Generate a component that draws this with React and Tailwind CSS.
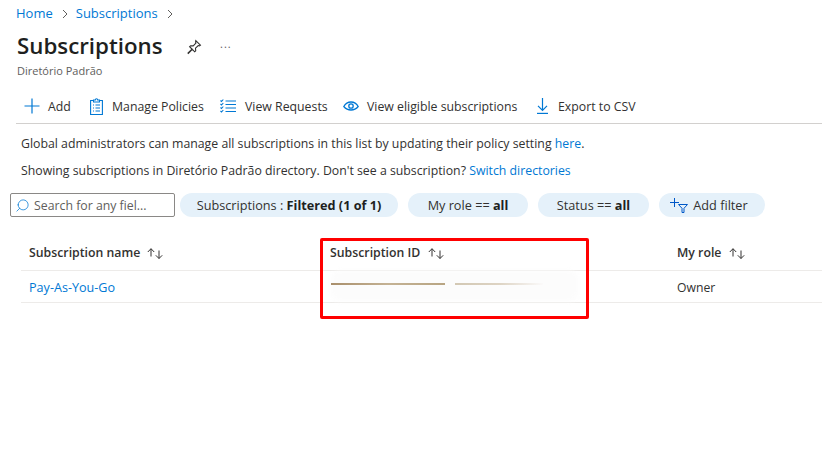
import React from "react";
import { Search } from "lucide-react";

const SortIcon = () => (
  <svg width="16" height="11" viewBox="0 0 16 11" fill="none" stroke="#323130" strokeWidth="1" className="shrink-0">
    <path d="M4 8.500V.8M.8 4L4 .7 7.200 4" />
    <path d="M12 2.500v8M8.800 7.300L12 10.500l3.200-3.200" />
  </svg>
);

const PinIcon = () => (
  <svg width="16" height="16" viewBox="0 0 16 16" fill="none" stroke="#323130" strokeWidth="1.1">
    <path d="M9.800 1.600l4.600 4.600-1 .6-1.200-.3-2.700 2.700.2 2.600-1 1-2.400-2.400-4 4-.3-.3 4-4L3.600 7.700l1-1 2.600.2 2.700-2.700-.3-1.200z" />
  </svg>
);

const PlusIcon = () => (
  <svg width="16" height="16" viewBox="0 0 16 16" fill="none" stroke="#0078d4" strokeWidth="1.2">
    <path d="M8 .5v15M.5 8h15" />
  </svg>
);

const ClipboardIcon = () => (
  <svg width="13" height="17" viewBox="0 0 13 17" fill="none" stroke="#0078d4" strokeWidth="1.1">
    <path d="M3 2.500H.6v14h11.800v-14H10" />
    <path d="M3.500 4V2h1.800a1.200 1.200 0 0 1 2.400 0h1.800v2z" />
    <path d="M3 7h1M5.500 7H10M3 10h1M5.500 10H10M3 13h1M5.500 13H10" />
  </svg>
);

const RequestsIcon = () => (
  <svg width="16" height="14" viewBox="0 0 16 14" fill="none" stroke="#0078d4" strokeWidth="1.1">
    <path d="M5.500 2H16M5.500 5.500H16M5.500 9H16M5.500 12.500H16" />
    <path d="M.5 1.500l1 1L3.300.5M.5 5l1 1 1.800-2M.5 8.500l1 1 1.800-2M.5 12l1 1 1.800-2" />
  </svg>
);

const EyeIcon = () => (
  <svg width="16" height="11" viewBox="0 0 16 11" fill="none" stroke="#0078d4" strokeWidth="1.3">
    <path d="M.8 5.500C2.500 2.500 5 1 8 1s5.500 1.500 7.200 4.500C13.500 7.500 11 9 8 9S2.500 7.500.8 5.500z" />
    <circle cx="8" cy="5" r="2.200" />
  </svg>
);

const ExportIcon = () => (
  <svg width="11" height="16" viewBox="0 0 11 16" fill="none" stroke="#0078d4" strokeWidth="1.2">
    <path d="M5.500 0v12M1 7.800l4.500 4.500L10 7.800" />
    <path d="M0 15.400h11" />
  </svg>
);

const AddFilterIcon = () => (
  <svg width="18" height="15" viewBox="0 0 18 15" fill="none" stroke="#0058c8" strokeWidth="1">
    <path d="M4.500 0v9M0 4.500h9" />
    <path d="M8.500 6.500h9l-3.500 3.800V14.500h-2v-4.200z" />
  </svg>
);

const Chevron = () => (
  <svg width="6" height="10" viewBox="0 0 6 10" fill="none" stroke="#605e5c">
    <path d="M1 1l4 4-4 4" />
  </svg>
);

const Chip = ({ children, className }) => (
  <div className={`flex h-6 items-center justify-center rounded-full bg-[#e5f1fa] text-[12.7px] text-[#323130] ${className}`}>
    {children}
  </div>
);

const ToolbarItem = ({ icon, label, className }) => (
  <div className={`flex items-center ${className}`}>
    <span className="-mt-[3px]">{icon}</span>
    <span>{label}</span>
  </div>
);

export default function App() {
  return (
    <div className="relative h-[454px] w-[822px] overflow-hidden bg-white font-['Open_Sans',sans-serif] text-[12.3px] text-[#323130]">
      <div className="flex h-[26px] items-center pl-4 pt-0.5 text-[13px] text-[#0078d4]">
        <span>Home</span>
        <span className="ml-[9px] mr-[8px]"><Chevron /></span>
        <span>Subscriptions</span>
        <span className="ml-[9px]"><Chevron /></span>
      </div>

      <div className="flex h-[36px] items-center pl-[17px] pt-[5px]">
        <h1 className="w-[169px] text-[22.3px] font-semibold leading-none text-[#201f1e]">Subscriptions</h1>
        <PinIcon />
        <span className="ml-[18px] -mt-1 text-[11px] tracking-[1px] text-[#605e5c]">...</span>
      </div>

      <div className="h-[17px] pl-[17px] text-[11px] leading-[17px] text-[#605e5c]">Diretório Padrão</div>

      <div className="ml-4 mt-[8px] flex h-[37px] items-center border-b border-[#d2d0ce] pt-[5px]">
        <ToolbarItem className="ml-[8px] w-[66px] gap-[8px]" icon={<PlusIcon />} label="Add" />
        <ToolbarItem className="w-[130px] gap-[9px]" icon={<ClipboardIcon />} label="Manage Policies" />
        <ToolbarItem className="w-[123px] gap-[9px]" icon={<RequestsIcon />} label="View Requests" />
        <ToolbarItem className="w-[194px] gap-[8px]" icon={<EyeIcon />} label="View eligible subscriptions" />
        <ToolbarItem className="gap-[10px]" icon={<ExportIcon />} label="Export to CSV" />
      </div>

      <p className="ml-[21px] mt-[11px] leading-[18px]">
        Global administrators can manage all subscriptions in this list by updating their policy setting{" "}
        <span className="text-[#0078d4]">here</span>.
      </p>
      <p className="ml-[21px] mt-[9px] leading-[18px]">
        Showing subscriptions in Diretório Padrão directory. Don't see a subscription?{" "}
        <span className="text-[#0078d4]">Switch directories</span>
      </p>

      <div className="ml-[10px] mt-[13px] flex items-center gap-[10px]">
        <div className="-mr-[5px] flex h-6 w-[165px] items-center gap-[4px] rounded-[2px] border border-[#8a8886] pl-[4px] text-[#605e5c]">
          <Search size={15} strokeWidth={1.2} color="#0078d4" className="-scale-x-100" />
          <span className="pt-[2px]">Search for any fiel...</span>
        </div>
        <Chip className="w-[218px] pt-px">
          <span>Subscriptions : <b className="font-bold text-[#201f1e]">Filtered (1 of 1)</b></span>
        </Chip>
        <Chip className="w-[120px] pt-px">
          <span>My role == <b className="font-bold text-[#201f1e]">all</b></span>
        </Chip>
        <Chip className="w-[111px] pt-px">
          <span>Status == <b className="font-bold text-[#201f1e]">all</b></span>
        </Chip>
        <Chip className="w-[106px] gap-[5px] pr-[6px]">
          <AddFilterIcon />
          <span className="pt-px">Add filter</span>
        </Chip>
      </div>

      <div className="ml-[21px] mt-[18px]">
        <div className="grid h-[36px] grid-cols-[309px_347px_1fr] items-center border-b border-[#edebe9] pt-px font-semibold">
          <div className="flex items-center gap-[7px] pl-2"><span>Subscription name</span><SortIcon /></div>
          <div className="flex items-center gap-[8px]"><span>Subscription ID</span><SortIcon /></div>
          <div className="flex items-center gap-[8px]"><span>My role</span><SortIcon /></div>
        </div>
        <div className="grid h-[32px] grid-cols-[309px_347px_1fr] items-center border-b border-[#edebe9] pt-[3px] text-[12.6px]">
          <div className="pl-2 text-[#0078d4]">Pay-As-You-Go</div>
          <div className="relative h-full">
            <div className="absolute left-px top-[-3px] h-[30px] w-[247px] rounded-lg bg-[#fcfcfc] blur-[2px]" />
            <div className="absolute left-px top-[9px] h-[1.5px] w-[114px] bg-gradient-to-r from-[#a98f6c] via-[#c4b294] to-[#b8a583] blur-[0.4px]" />
            <div className="absolute left-[125px] top-[9px] h-[1.5px] w-[88px] bg-gradient-to-r from-[#d3c8b4] via-[#ddd3c3] to-[#fbfafa] blur-[0.4px]" />
          </div>
          <div className="text-[12.2px]">Owner</div>
        </div>
      </div>

      {/* red highlight drawn over the table */}
      <div className="absolute left-[320px] top-[238px] h-[81px] w-[269px] rounded-[2px] border-[3px] border-[#ff0000]" />
    </div>
  );
}
